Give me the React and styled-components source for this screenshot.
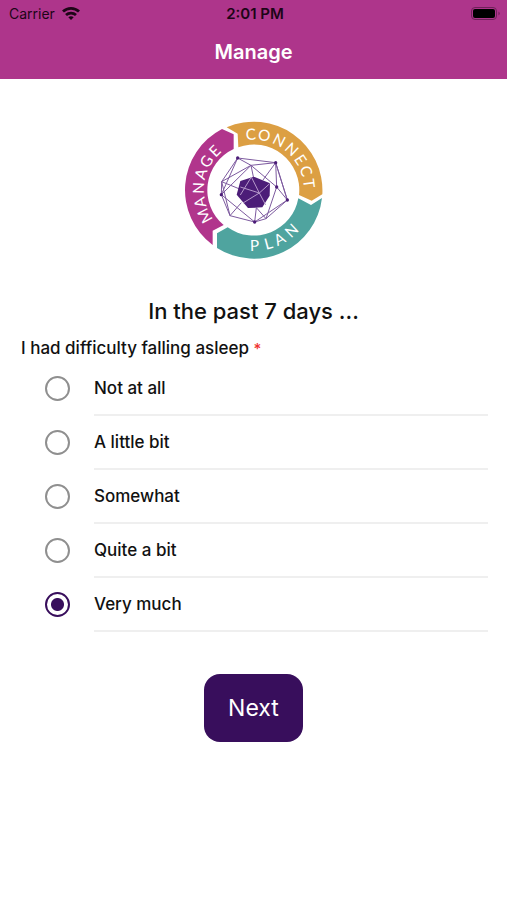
import React, { useState } from 'react';
import styled, { createGlobalStyle } from 'styled-components';

const GlobalStyle = createGlobalStyle`
* {
    box-sizing: border-box;
}

body {
    margin: 0;
    background-color: #fff;
    color: #111;
    font-family: Inter, 'Liberation Sans', sans-serif;
}
`

const Header = styled.header`
background-color: #ae358b;
color: #fff;
padding-bottom: 12px;
`

const StatusBar = styled.div`
display: grid;
grid-template-columns: 1fr auto 1fr;
align-items: center;
height: 27px;
padding: 0 6px 0 9px;
color: #1d0517;
font-size: 14px;
`

const Carrier = styled.div`
display: flex;
align-items: center;
gap: 7px;
`

const Clock = styled.div`
font-size: 15px;
font-weight: 600;
`

const BatteryIcon = styled.svg`
justify-self: end;
`

const Title = styled.h1`
margin: 0;
padding-top: 11px;
font-size: 20px;
font-weight: 600;
line-height: 29px;
text-align: center;
`

const Content = styled.main`
display: flex;
flex-direction: column;
align-items: center;
padding: 36px 19px 24px;
`

const LogoSvg = styled.svg`
width: 150px;
height: 150px;
`

const LogoText = styled.text`
fill: #fff;
font-family: Lato, sans-serif;
font-size: 46px;
`

const Heading = styled.h2`
margin: 31px 0 0;
font-size: 22px;
font-weight: 500;
line-height: 30px;
`

const Question = styled.fieldset`
width: 100%;
margin: 9px 0 0;
padding: 0;
border: none;
`

const QuestionLabel = styled.legend`
padding: 0 2px;
font-size: 17px;
font-weight: 500;
line-height: 27px;
`

const Required = styled.span`
color: #f0322f;
font-size: 15px;
`

const Option = styled.label`
display: flex;
align-items: center;
gap: 24px;
padding-left: 26px;
cursor: pointer;
`

const OptionText = styled.span`
flex: 1;
height: 54px;
border-bottom: 2px solid #efefef;
font-size: 17px;
font-weight: 500;
line-height: 52px;
`

const Radio = styled.input`
appearance: none;
width: 25px;
height: 25px;
margin: 0 0 2px;
border: 2px solid #8f8f8f;
border-radius: 50%;
cursor: pointer;

&:checked {
    border-color: #380e5c;
    background: radial-gradient(circle, #380e5c 6px, #fff 7px);
}
`

const NextButton = styled.button`
margin-top: 42px;
padding: 19px 24px;
border: none;
border-radius: 16px;
background-color: #380e5c;
color: #fff;
font-family: inherit;
font-size: 23px;
line-height: 30px;
cursor: pointer;
`

const CENTER = { x: 222, y: 225 }

// half of each capital's advance, in logo units
const HALF = { A: 16, C: 15, E: 13, G: 16, L: 11, M: 21, N: 17, O: 18, P: 14, T: 13 }

// Each angle is the middle of a letter, clockwise from the top.
// Inverted words run along the bottom with their feet outwards.
const RingWord = ({ word, angles, radius, inverted }) => {
    const glyphs = angles.map((angle, i) => {
        const rad = angle * Math.PI / 180
        const half = HALF[word[i]] * (inverted ? -1 : 1)
        return {
            x: CENTER.x + radius * Math.sin(rad) - half * Math.cos(rad),
            y: CENTER.y - radius * Math.cos(rad) - half * Math.sin(rad),
            turn: inverted ? angle - 180 : angle
        }
    })

    return (
        <LogoText
            x={glyphs.map(g => g.x.toFixed(1)).join(' ')}
            y={glyphs.map(g => g.y.toFixed(1)).join(' ')}
            rotate={glyphs.map(g => g.turn).join(' ')}
        >
            {word}
        </LogoText>
    )
}

const nodes = [[174, 129], [288, 143], [291, 216], [323, 255], [225, 321], [125, 239]]

const Logo = () => (
    <LogoSvg viewBox="-2 0 450 450" role="img" aria-label="Manage, Connect, Plan">
        <path fill="#dc9f43" d="M141 37A206 206 0 0 1 428 238L396 257L358 240A136 136 0 0 0 176 97L174 56Z" />
        <path fill="#4fa49f" d="M427 249A206 206 0 0 1 112 399L112 355L144 337A136 136 0 0 0 356 250L394 270Z" />
        <path fill="#b1358c" d="M127 42L162 58L162 102A136 136 0 0 0 132 330L99 347L99 390A206 206 0 0 1 127 42Z" />
        <RingWord word="CONNECT" angles={[-3, 11, 27, 43, 57, 70, 83]} radius={151} />
        <RingWord word="MANAGE" angles={[-118, -103, -88, -73, -59, -45]} radius={149} />
        <RingWord word="PLAN" angles={[179, 165, 152, 137]} radius={183} inverted />
        <g fill="none" stroke="#7d5a9f" strokeWidth="3" strokeLinejoin="round">
            <path d="M174 129L288 143L323 255L259 311L225 321L151 302L125 239L126 200Z" />
            <path d="M174 129L125 239M174 129L214 151L288 143L291 216L323 255L225 321L125 239M214 151L291 216" />
            <path d="M126 200L214 151M126 200L180 222M151 302L126 200M288 143L250 195M288 143L323 255" />
            <path d="M214 151L222 190M151 302L185 263M125 239L214 151M230 278L225 321M230 278L259 311L291 216" />
        </g>
        <path fill="#4c1d78" d="M222 185L271 205L270 242L248 277L205 279L171 239L182 198Z" />
        <path fill="none" stroke="#b79acb" strokeWidth="3" d="M215 186L239 234L270 206M239 234L258 270M239 234L190 264M239 234L182 216M182 240L215 186" />
        {nodes.map(([x, y]) => <circle key={x} cx={x} cy={y} r="5" fill="#4c1d78" />)}
    </LogoSvg>
)

const WifiIcon = () => (
    <svg width="18" height="13" viewBox="0 0 18 13" fill="none" stroke="#1d0517" strokeWidth="2.8" aria-hidden="true">
        <path d="M1 4.6C5.5 0.4 12.5 0.4 17 4.6" />
        <path d="M4 8C6.8 5.4 11.2 5.4 14 8" />
        <path fill="#1d0517" stroke="none" d="M6.3 10.3Q9 8 11.7 10.3L9 13Z" />
    </svg>
)

const options = ['Not at all', 'A little bit', 'Somewhat', 'Quite a bit', 'Very much']

export default function App() {
    const [answer, setAnswer] = useState('Very much')

    return (
        <>
            <GlobalStyle />
            <Header>
                <StatusBar>
                    <Carrier>Carrier <WifiIcon /></Carrier>
                    <Clock>2:01 PM</Clock>
                    <BatteryIcon width="30" height="14" viewBox="0 0 30 14" aria-hidden="true">
                        <rect x="0.5" y="0.5" width="25" height="12" rx="3.5" fill="none" stroke="#6f2159" />
                        <rect x="2" y="2" width="22" height="9" rx="2" fill="#000" />
                        <path d="M27.5 4.5Q30 6.5 27.5 8.5Z" fill="#6f2159" />
                    </BatteryIcon>
                </StatusBar>
                <Title>Manage</Title>
            </Header>
            <Content>
                <Logo />
                <Heading>In the past 7 days ...</Heading>
                <Question>
                    <QuestionLabel>I had difficulty falling asleep <Required>*</Required></QuestionLabel>
                    {options.map(option => (
                        <Option key={option}>
                            <Radio
                                type="radio"
                                name="difficulty"
                                value={option}
                                checked={answer === option}
                                onChange={() => setAnswer(option)}
                            />
                            <OptionText>{option}</OptionText>
                        </Option>
                    ))}
                </Question>
                <NextButton type="button">Next</NextButton>
            </Content>
        </>
    )
}
